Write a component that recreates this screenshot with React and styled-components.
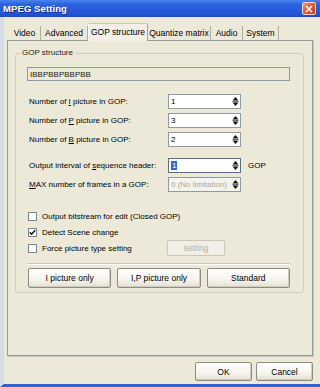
import React from 'react';
import styled, { createGlobalStyle } from 'styled-components';

const Global = createGlobalStyle`
  html, body { margin: 0; padding: 0; background: #ECE9D8; }
  body { font-family: "Liberation Sans", Arial, sans-serif; font-size: 8px; color: #000; }
  * { box-sizing: border-box; }
`;

const Window = styled.div`
  width: 320px;
  height: 387px;
  display: flex;
  flex-direction: column;
  background: #ECE9D8;
  overflow: hidden;
`;

const TitleBar = styled.div`
  height: 17px;
  flex: none;
  display: flex;
  align-items: center;
  justify-content: space-between;
  padding: 0 4px 0 3px;
  background: linear-gradient(#4a86ee 0%, #2a62df 25%, #2558d8 70%, #1f4cc4 100%);
`;

const Title = styled.span`
  color: #fff;
  font-weight: bold;
  font-size: 9.5px;
  text-shadow: 1px 1px 0 #13308c;
  letter-spacing: 0.1px;
`;

const CloseBtn = styled.div`
  width: 14px;
  height: 13px;
  border: 1px solid #f3d3c8;
  border-radius: 2px;
  background: linear-gradient(135deg, #f09a78 0%, #e2582e 50%, #c9421e 100%);
  display: flex;
  align-items: center;
  justify-content: center;
`;

const Frame = styled.div`
  flex: 1;
  display: flex;
  flex-direction: column;
  border-left: 4px solid #d6dde9;
  border-bottom: 3px solid #3560cf;
  padding: 6px 7px 0 3px;
`;

const TabStrip = styled.div`
  display: flex;
  align-items: flex-end;
  height: 17px;
  padding-left: 2px;
  position: relative;
  z-index: 1;
`;

const Tab = styled.div`
  width: ${p => p.$w}px;
  height: ${p => (p.$active ? 18 : 14)}px;
  display: flex;
  align-items: center;
  justify-content: center;
  padding-bottom: ${p => (p.$active ? 2 : 0)}px;
  white-space: nowrap;
  font-size: 8.5px;
  background: ${p => (p.$active ? '#F1EFE6' : 'transparent')};
  border-right: 1px solid ${p => (p.$active ? '#a3a296' : '#aeada2')};
  border-top: ${p => (p.$active ? '1px solid #c9c8bc' : 'none')};
  border-left: ${p => (p.$active ? '1px solid #fff' : 'none')};
  border-radius: ${p => (p.$active ? '2px 2px 0 0' : '0')};
  margin-bottom: ${p => (p.$active ? -1 : 0)}px;
`;

const Panel = styled.div`
  height: 316px;
  flex: none;
  border: 1px solid #919b9c;
  box-shadow: 1px 1px 0 #c8c6b8;
  padding: 12px 8px 0 7px;
  background: #ECE9D8;
`;

const Group = styled.div`
  position: relative;
  border: 1px solid #d0d0bf;
  border-radius: 3px;
  padding: 13px 12px 4px 11px;
  display: flex;
  flex-direction: column;
`;

const Legend = styled.span`
  position: absolute;
  top: -6px;
  left: 4px;
  padding: 0 2px;
  background: #ECE9D8;
  color: #1a1a1a;
  line-height: 10px;
`;

const ReadField = styled.div`
  height: 14px;
  width: 263px;
  border: 1px solid #8e9aa6;
  padding-left: 2px;
  display: flex;
  align-items: center;
  background: #ECE9D8;
  color: #222;
`;

const Rows = styled.div`
  display: grid;
  grid-template-columns: 141px 73px auto;
  row-gap: 4px;
  align-items: center;
  margin-top: ${p => p.$mt}px;
`;

const Label = styled.span`
  padding-left: 2px;
  white-space: nowrap;
`;

const Unit = styled.span`
  padding-left: 7px;
`;

const Spin = styled.div`
  height: 15px;
  display: flex;
  align-items: center;
  border: 1px solid ${p => (p.$focus ? '#5e6e80' : '#8e9aa6')};
  background: ${p => (p.$disabled ? '#f4f3ee' : '#fff')};
  color: ${p => (p.$disabled ? '#aca899' : '#000')};
  padding-left: 2px;
`;

const SpinText = styled.span`
  flex: 1;
  white-space: nowrap;
  overflow: hidden;
`;

const Selected = styled.span`
  background: #316ac5;
  color: #fff;
  padding: 0 1px;
`;

const SpinArrows = styled.div`
  width: 10px;
  height: 13px;
  display: flex;
  align-items: center;
  justify-content: center;
`;

const Checks = styled.div`
  display: flex;
  flex-direction: column;
  margin-top: 16px;
`;

const CheckRow = styled.div`
  height: 16px;
  display: flex;
  align-items: center;
`;

const CheckLabel = styled.label`
  display: flex;
  align-items: center;
  gap: 5px;
  padding-left: 1px;
  width: ${p => (p.$w ? `${p.$w}px` : 'auto')};
  white-space: nowrap;
`;

const Box = styled.span`
  flex: none;
  width: 9px;
  height: 9px;
  border: 1px solid #7b8692;
  background: #fff;
  display: inline-flex;
  align-items: center;
  justify-content: center;
`;

const Separator = styled.div`
  width: 263px;
  margin-top: 7px;
  border-top: 1px solid #c9c7b9;
  border-bottom: 1px solid #fff;
`;

const ButtonRow = styled.div`
  display: grid;
  grid-template-columns: repeat(3, 1fr);
  gap: 6px;
  width: 263px;
  margin-top: 3px;
  padding-left: 1px;
`;

const Button = styled.button`
  height: ${p => p.$h || 20}px;
  width: ${p => (p.$w ? `${p.$w}px` : 'auto')};
  font-family: "Liberation Sans", Arial, sans-serif;
  font-size: 8.5px;
  color: ${p => (p.$disabled ? '#b5b2a5' : '#000')};
  border: 1px solid ${p => (p.$disabled ? '#c9c7ba' : '#8e8c80')};
  border-radius: 2px;
  background: ${p => (p.$disabled
    ? '#f1efe6'
    : 'linear-gradient(#ffffff 0%, #f6f5ef 55%, #e4e1d4 100%)')};
  box-shadow: ${p => (p.$disabled ? 'none' : 'inset -1px -1px 0 #cfccbe')};
  padding: 0;
  white-space: nowrap;
`;

const Footer = styled.div`
  display: flex;
  justify-content: flex-end;
  gap: 4px;
  padding-top: 6px;
`;

const SpinIcon = () => (
  <svg width="7" height="11" viewBox="0 0 7 11">
    <polygon points="0.5,4.5 6.5,4.5 3.5,1" fill="#111" />
    <line x1="0.5" y1="5.5" x2="6.5" y2="5.5" stroke="#666" strokeWidth="1" />
    <polygon points="0.5,6.5 6.5,6.5 3.5,10" fill="#111" />
  </svg>
);

const SpinBox = ({ children, disabled, focus }) => (
  <Spin $disabled={disabled} $focus={focus}>
    <SpinText>{children}</SpinText>
    <SpinArrows><SpinIcon /></SpinArrows>
  </Spin>
);

const Check = ({ checked, width, children }) => (
  <CheckLabel $w={width}>
    <Box>
      {checked && (
        <svg width="7" height="7" viewBox="0 0 7 7">
          <polyline points="0.8,3.3 2.6,5.2 6.2,1.2" fill="none" stroke="#111" strokeWidth="1.5" />
        </svg>
      )}
    </Box>
    {children}
  </CheckLabel>
);

const tabs = [
  ['Video', 32],
  ['Advanced', 47],
  ['GOP structure', 60, true],
  ['Quantize matrix', 63],
  ['Audio', 32],
  ['System', 36],
];

export default function App() {
  return (
    <>
      <Global />
      <Window>
        <TitleBar>
          <Title>MPEG Setting</Title>
          <CloseBtn>
            <svg width="8" height="8" viewBox="0 0 8 8">
              <path d="M1 1 L7 7 M7 1 L1 7" stroke="#fff" strokeWidth="1.6" />
            </svg>
          </CloseBtn>
        </TitleBar>
        <Frame>
          <TabStrip>
            {tabs.map(([t, w, a]) => (
              <Tab key={t} $w={w} $active={a}>{t}</Tab>
            ))}
          </TabStrip>
          <Panel>
            <Group>
              <Legend>GOP structure</Legend>
              <ReadField>IBBPBBPBBPBB</ReadField>
              <Rows $mt={13}>
                <Label>Number of <u>I</u> picture in GOP:</Label>
                <SpinBox>1</SpinBox>
                <span />
                <Label>Number of <u>P</u> picture in GOP:</Label>
                <SpinBox>3</SpinBox>
                <span />
                <Label>Number of <u>B</u> picture in GOP:</Label>
                <SpinBox>2</SpinBox>
                <span />
              </Rows>
              <Rows $mt={11}>
                <Label>Output interval of <u>s</u>equence header:</Label>
                <SpinBox focus><Selected>1</Selected></SpinBox>
                <Unit>GOP</Unit>
                <Label><u>M</u>AX number of frames in a GOP:</Label>
                <SpinBox disabled>0 (No limitation)</SpinBox>
                <span />
              </Rows>
              <Checks>
                <CheckRow>
                  <Check>Output bitstream for edit (Closed GOP)</Check>
                </CheckRow>
                <CheckRow>
                  <Check checked>Detect Scene change</Check>
                </CheckRow>
                <CheckRow>
                  <Check width={140}>Force picture type setting</Check>
                  <Button $disabled $w={58} $h={16}>setting</Button>
                </CheckRow>
              </Checks>
              <Separator />
              <ButtonRow>
                <Button>I picture only</Button>
                <Button>I,P picture only</Button>
                <Button>Standard</Button>
              </ButtonRow>
            </Group>
          </Panel>
          <Footer>
            <Button $w={57} $h={19}>OK</Button>
            <Button $w={57} $h={19}>Cancel</Button>
          </Footer>
        </Frame>
      </Window>
    </>
  );
}
